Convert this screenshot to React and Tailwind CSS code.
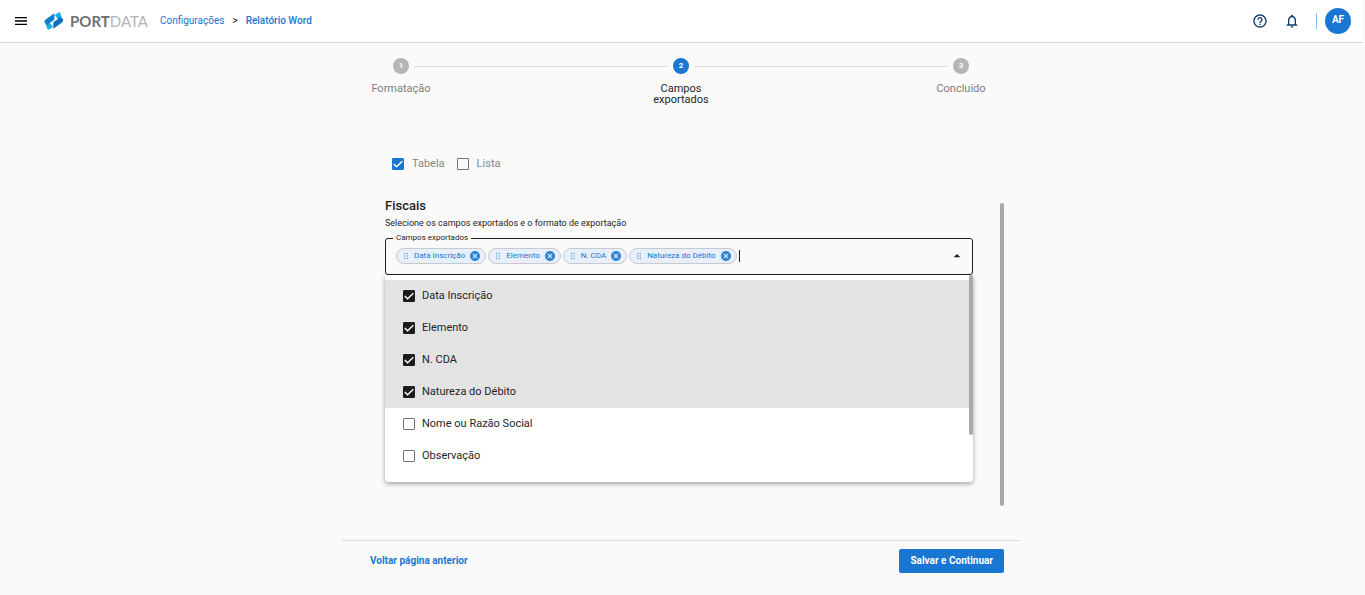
import { useState } from 'react';
import { MdCancel, MdArrowDropUp, MdDragIndicator, MdHelpOutline, MdMenu, MdNotificationsNone } from 'react-icons/md';

const STEPS = ['Formatação', 'Campos exportados', 'Concluído'];
const CURRENT_STEP = 1;

const FIELDS = ['Data Inscrição', 'Elemento', 'N. CDA', 'Natureza do Débito', 'Nome ou Razão Social', 'Observação'];

function Checkbox({ label, checked, onChange, dark, className }) {
  return (
    <label className={`flex items-center leading-4 cursor-pointer ${className}`}>
      <span className="grid place-items-center">
        <input
          type="checkbox"
          checked={checked}
          onChange={onChange}
          className={`[grid-area:1/1] appearance-none size-3 rounded-[1px] border border-[#757575] bg-transparent ${
            dark
              ? 'checked:bg-[#1c1c1e] checked:border-[#1c1c1e]'
              : 'checked:bg-[#1976d2] checked:border-[#1976d2]'
          }`}
        />
        {checked && (
          <svg viewBox="0 0 12 12" className="[grid-area:1/1] size-3 pointer-events-none" fill="none" stroke="white" strokeWidth="1.4">
            <path d="M1.8 6 4.6 8.8 10.3 3.2" />
          </svg>
        )}
      </span>
      <span>{label}</span>
    </label>
  );
}

function Logo() {
  return (
    <a href="#" aria-label="Portdata" className="flex items-center gap-1.5">
      <svg viewBox="0 0 60 54" className="w-5 h-[18px]">
        <path d="M2 28 10 50Q13 55 17 52L27 44 15 30z" fill="#12aeea" />
        <path d="M31 4 6 22Q-1 27 3 33L12 39 17 33 31 23z" fill="#0f7fcb" />
        <g transform="rotate(180 29.5 27)">
          <path d="M2 28 10 50Q13 55 17 52L27 44 15 30z" fill="#12aeea" />
          <path d="M31 4 6 22Q-1 27 3 33L12 39 17 33 31 23z" fill="#0d6dbb" />
        </g>
      </svg>
      <span className="text-[15px] leading-4 font-['Lato',sans-serif] font-bold text-[#6f7073]">
        PORT<span className="font-normal text-[#b3b3bb]">DATA</span>
      </span>
    </a>
  );
}

function Header() {
  return (
    <header className="flex items-center h-[43px] pl-[13px] pr-[11px] bg-white border-b border-[#d5d5d5]">
      <button type="button" aria-label="Menu" className="mr-[15px]">
        <MdMenu className="size-4 text-black" />
      </button>
      <Logo />
      <nav className="flex items-center gap-2 ml-3 text-[10px] leading-4 text-[#1976d2]">
        <a href="#">Configurações</a>
        <span className="text-black">&gt;</span>
        <a href="#" className="font-medium">Relatório Word</a>
      </nav>
      <div className="flex items-center ml-auto">
        <button type="button" aria-label="Ajuda" className="mr-4">
          <MdHelpOutline className="size-4 text-[#0d3c6e]" />
        </button>
        <button type="button" aria-label="Notificações">
          <MdNotificationsNone className="size-4 text-[#0d3c6e]" />
        </button>
        <div className="w-px h-4 ml-4 mr-2 bg-[#8fbce8]" />
        <button type="button" className="size-[26px] pb-0.5 rounded-full bg-[#1976d2] text-white text-[10px] leading-4 font-bold">
          AF
        </button>
      </div>
    </header>
  );
}

function Stepper() {
  return (
    <ol className="flex w-full max-w-[840px] mx-auto pt-[15px]">
      {STEPS.map((step, index) => {
        const isActive = index === CURRENT_STEP;
        return (
          <li key={step} className="flex-1 flex flex-col items-center">
            <div className="flex items-center gap-[5px] w-full">
              <div className={`flex-1 h-px ${index > 0 ? 'bg-[#dcdcdc]' : ''}`} />
              <span
                className={`flex items-center justify-center size-4 rounded-full text-[8px] font-bold text-white ${
                  isActive ? 'bg-[#1976d2]' : 'bg-[#b5b5b5]'
                }`}
              >
                {index + 1}
              </span>
              <div className={`flex-1 h-px ${index < STEPS.length - 1 ? 'bg-[#dcdcdc]' : ''}`} />
            </div>
            <span className={`w-16 mt-[9px] text-[11px] leading-[11px] text-center ${isActive ? 'text-[#1f1f1f]' : 'text-[#7d7d7d]'}`}>
              {step}
            </span>
          </li>
        );
      })}
    </ol>
  );
}

function Chip({ label, onDelete }) {
  return (
    <span className="flex items-center h-4 px-1 rounded-full border border-[#c6c9cd] bg-[#e6effa] text-[8px] leading-3 text-[#1976d2]">
      <MdDragIndicator className="size-2.5 mr-[3px] text-[#6fa8e0]" />
      {label}
      <button type="button" aria-label={`Remover ${label}`} onClick={onDelete} className="ml-1">
        <MdCancel className="size-3 text-[#2f82d6]" />
      </button>
    </span>
  );
}

function FieldSelect() {
  const [selected, setSelected] = useState(FIELDS.slice(0, 4));

  const toggle = (field) => {
    setSelected((prev) => (prev.includes(field) ? prev.filter((f) => f !== field) : [...prev, field]));
  };

  return (
    <div className="relative">
      <fieldset className="h-[42px] px-[7px] border border-[#1f1f1f] rounded-[3px]">
        <legend className="px-[3px] text-[8px] leading-[10px] text-[#1f1f1f]">Campos exportados</legend>
        <div className="flex items-center gap-0.5 pt-[5px] pl-[3px]">
          {FIELDS.filter((f) => selected.includes(f)).map((field) => (
            <Chip key={field} label={field} onDelete={() => toggle(field)} />
          ))}
          <input
            type="text"
            aria-label="Campos exportados"
            className="flex-1 min-w-0 h-3 text-[11px] outline-none border-l border-[#1f1f1f]"
          />
          <button type="button" aria-label="Fechar">
            <MdArrowDropUp className="size-4 text-[#1f1f1f]" />
          </button>
        </div>
      </fieldset>

      {/* Options menu */}
      <div className="absolute left-0 right-0 top-full flex items-start h-[207px] rounded-b bg-white shadow-[0_2px_5px_rgba(0,0,0,0.35)] z-10">
        <ul className="flex-1 pt-[5px]">
          {FIELDS.map((field) => (
            <li key={field} className={`flex h-8 pl-[18px] ${selected.includes(field) ? 'bg-[#e3e3e3]' : ''}`}>
              <Checkbox
                dark
                label={field}
                checked={selected.includes(field)}
                onChange={() => toggle(field)}
                className="flex-1 gap-[7px] text-[11px] text-[#1f1f1f]"
              />
            </li>
          ))}
        </ul>
        <div className="w-1 h-40 rounded-full bg-[#a9a9a9]" />
      </div>
    </div>
  );
}

export default function App() {
  const [format, setFormat] = useState('Tabela');

  return (
    <div className="min-h-screen pr-[3px] bg-[#fafafa] font-['Roboto',sans-serif] text-[#1f1f1f]">
      <Header />
      <Stepper />

      <main className="w-full max-w-[678px] mx-auto">
        <div className="flex gap-3 pt-[51px] pl-[50px] text-[11px] text-[#858585]">
          {['Tabela', 'Lista'].map((item) => (
            <Checkbox
              key={item}
              label={item}
              checked={format === item}
              onChange={() => setFormat(item)}
              className="gap-2"
            />
          ))}
        </div>

        {/* Scrollable section */}
        <div className="flex mt-[31px] pl-[43px] pr-4">
          <section className="flex-1 h-[303px]">
            <h2 className="text-[13px] leading-4 font-medium -mt-[5px]">Fiscais</h2>
            <p className="mt-[3px] mb-1 text-[9px] leading-3">Selecione os campos exportados e o formato de exportação</p>
            <FieldSelect />
          </section>
          <div className="w-1 ml-[27px] rounded-full bg-[#a9a9a9]" />
        </div>

        <footer className="flex items-center justify-between mt-[34px] pt-2 pl-7 pr-4 border-t border-[#dcdcdc]">
          <button type="button" className="text-[10px] leading-4 font-bold text-[#1976d2]">
            Voltar página anterior
          </button>
          <button type="button" className="h-6 px-[11px] rounded-xs bg-[#1976d2] text-[10px] leading-4 font-bold text-white">
            Salvar e Continuar
          </button>
        </footer>
      </main>
    </div>
  );
}
